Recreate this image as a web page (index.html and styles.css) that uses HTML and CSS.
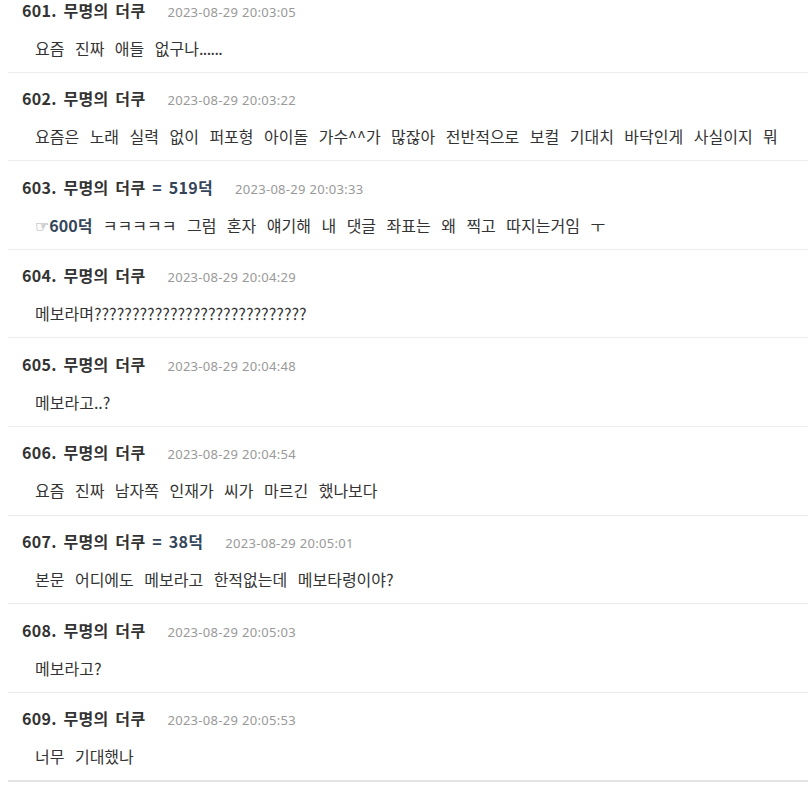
FILE: index.html
```html
<!DOCTYPE html>
<html lang="ko">
<head>
<meta charset="utf-8">
<link rel="stylesheet" href="styles.css">
</head>
<body>
<div class="list">
  <div class="row">
    <div class="head"><span class="name">601. 무명의 더쿠</span><span class="date">2023-08-29 20:03:05</span></div>
    <div class="body">요즘 진짜 애들 없구나<span class="dots">......</span></div>
  </div>
  <div class="row">
    <div class="head"><span class="name">602. 무명의 더쿠</span><span class="date">2023-08-29 20:03:22</span></div>
    <div class="body">요즘은 노래 실력 없이 퍼포형 아이돌 가수^^가 많잖아 전반적으로 보컬 기대치 바닥인게 사실이지 뭐</div>
  </div>
  <div class="row">
    <div class="head"><span class="name">603. 무명의 더쿠 <span class="ref">= 519덕</span></span><span class="date">2023-08-29 20:03:33</span></div>
    <div class="body"><span class="hand">☞</span><span class="ref">600덕</span> ㅋㅋㅋㅋㅋ 그럼 혼자 얘기해 내 댓글 좌표는 왜 찍고 따지는거임 ㅜ</div>
  </div>
  <div class="row">
    <div class="head"><span class="name">604. 무명의 더쿠</span><span class="date">2023-08-29 20:04:29</span></div>
    <div class="body">메보라며????????????????????????????</div>
  </div>
  <div class="row">
    <div class="head"><span class="name">605. 무명의 더쿠</span><span class="date">2023-08-29 20:04:48</span></div>
    <div class="body">메보라고..?</div>
  </div>
  <div class="row">
    <div class="head"><span class="name">606. 무명의 더쿠</span><span class="date">2023-08-29 20:04:54</span></div>
    <div class="body">요즘 진짜 남자쪽 인재가 씨가 마르긴 했나보다</div>
  </div>
  <div class="row">
    <div class="head"><span class="name">607. 무명의 더쿠 <span class="ref">= 38덕</span></span><span class="date">2023-08-29 20:05:01</span></div>
    <div class="body">본문 어디에도 메보라고 한적없는데 메보타령이야?</div>
  </div>
  <div class="row">
    <div class="head"><span class="name">608. 무명의 더쿠</span><span class="date">2023-08-29 20:05:03</span></div>
    <div class="body">메보라고?</div>
  </div>
  <div class="row last">
    <div class="head"><span class="name">609. 무명의 더쿠</span><span class="date">2023-08-29 20:05:53</span></div>
    <div class="body">너무 기대했나</div>
  </div>
</div>
</body>
</html>
```

FILE: styles.css
```css
html, body {
  background: #fff;
}
body {
  margin: 0 0 0 8px;
  overflow: hidden;
  font-family: "Noto Sans CJK KR", "Noto Sans", sans-serif;
  color: #333;
}
.list {
  margin-top: -16px;
}
.row {
  height: 87.6px;
  box-sizing: content-box;
  border-bottom: 1px solid #ececec;
  padding: 0 0 0 14px;
}
.row.last {
  border-bottom: 2px solid #e4e4e4;
}
.head {
  padding-top: 17.5px;
  height: 16px;
  line-height: 16px;
  display: flex;
  align-items: baseline;
  gap: 22px;
}
.name {
  font-size: 16px;
  font-weight: 700;
  letter-spacing: 0.3px;
  word-spacing: 2px;
  color: #333;
}
.ref {
  color: #34455a;
  font-weight: 700;
}
.date {
  font-family: "Noto Sans", sans-serif;
  font-size: 13px;
  letter-spacing: 0.3px;
  color: #999;
}
.body {
  margin-top: 18px;
  line-height: 24px;
  font-size: 16px;
  letter-spacing: 0;
  word-spacing: 6px;
  padding-left: 13px;
  color: #333;
  white-space: nowrap;
}
.dots {
  letter-spacing: -0.6px;
}
.hand {
  color: #666;
  font-family: "DejaVu Sans", sans-serif;
}
```
